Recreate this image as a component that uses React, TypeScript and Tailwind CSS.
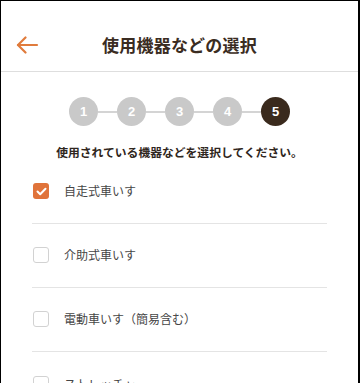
import React from "react";

const items = [
  { label: "自走式車いす", checked: true },
  { label: "介助式車いす", checked: false },
  { label: "電動車いす（簡易含む）", checked: false },
  { label: "ストレッチャー", checked: false },
];

export default function App() {
  return (
    <div
      className="w-[360px] h-[383px] overflow-hidden bg-white border-black border-t border-l border-r-2 box-border"
      style={{ fontFamily: '"Noto Sans CJK JP", "Noto Sans", sans-serif' }}
    >
      <header className="relative h-[71px] border-b border-[#dedede] flex items-center justify-center">
        <button className="absolute left-[15px] top-[34px] w-[23px] h-[20px] flex items-center justify-center">
          <svg width="23" height="18" viewBox="0 0 23 18" fill="none" stroke="#e07b3c" strokeWidth="2.2" strokeLinecap="round" strokeLinejoin="round">
            <path d="M21 9H2" />
            <path d="M9.5 1.5L2 9l7.5 7.5" />
          </svg>
        </button>
        <h1 className="mt-[18px] text-[17px] font-bold text-[#3a2c22] tracking-[0.2px]">使用機器などの選択</h1>
      </header>

      <div className="flex justify-center items-center mt-[25px]">
        {[1, 2, 3, 4, 5].map((n, i) => (
          <React.Fragment key={n}>
            {i > 0 && <div className="w-[19px] h-[2px] bg-[#d4d4d4]" />}
            <div
              className={`w-[29px] h-[29px] rounded-full flex items-center justify-center text-[13px] font-bold text-white ${
                n === 5 ? "bg-[#3a2a1d]" : "bg-[#c9c9c9]"
              }`}
              style={{ fontFamily: '"Liberation Sans", Arial, sans-serif' }}
            >
              {n}
            </div>
          </React.Fragment>
        ))}
      </div>

      <p className="mt-[17px] text-center text-[11.8px] font-bold text-[#2f2620]">
        使用されている機器などを選択してください。
      </p>

      <ul className="mt-[-1px] px-[31px]">
        {items.map((it, i) => (
          <li
            key={it.label}
            className={`h-[64px] flex items-center gap-[15px] pl-[1px] ${i < items.length - 1 ? "border-b border-[#e4e4e4]" : ""}`}
          >
            {it.checked ? (
              <span className="w-[16px] h-[16px] rounded-[3px] bg-[#e0733a] flex items-center justify-center">
                <svg width="11" height="9" viewBox="0 0 11 9" fill="none" stroke="white" strokeWidth="2" strokeLinecap="round" strokeLinejoin="round">
                  <path d="M1.5 4.5L4.2 7.2L9.5 1.8" />
                </svg>
              </span>
            ) : (
              <span className="w-[16px] h-[16px] rounded-[3px] border-[1.5px] border-[#d2d2d2] bg-white" />
            )}
            <span className="text-[12px] text-[#464646]">{it.label}</span>
          </li>
        ))}
      </ul>
    </div>
  );
}
